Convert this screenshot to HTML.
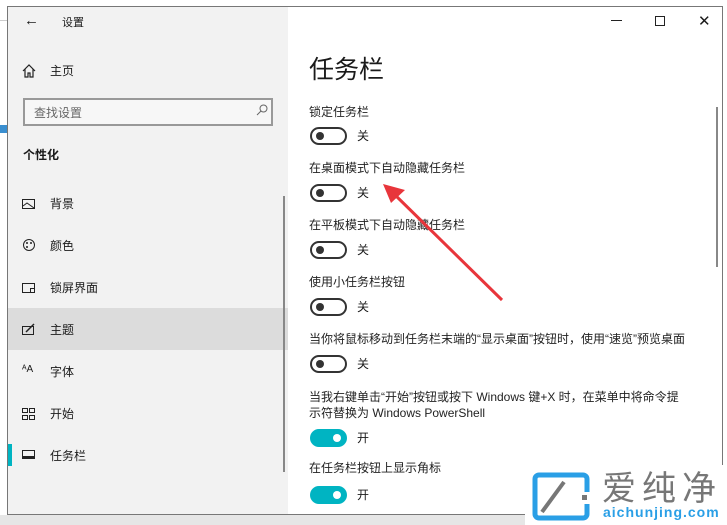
<!DOCTYPE html>
<html><head><meta charset="utf-8"><style>
*{margin:0;padding:0;box-sizing:border-box}
body{width:727px;height:525px;overflow:hidden;background:#fff;position:relative;font-family:"Liberation Sans","Noto Sans CJK SC",sans-serif;font-size:12px;color:#1a1a1a}
.a{position:absolute}
#win{left:7px;top:6px;width:716px;height:509px;border:1px solid #777;background:#fff;overflow:hidden}
#side{left:0;top:0;width:280px;height:509px;background:#f2f2f2}
.it{position:absolute;left:42px;font-size:12px;line-height:14px}
.ic{position:absolute;left:14px}
.lbl{position:absolute;left:301px;font-size:12px;line-height:14px;color:#222}
.tg{position:absolute;left:302px;width:37px;height:18px;border:2px solid #333;border-radius:9px}
.tg::after{content:"";position:absolute;left:4px;top:3px;width:8px;height:8px;border-radius:50%;background:#333}
.on{background:#00b4c2;border-color:#00b4c2}
.on::after{left:auto;right:4px;background:#fff}
.st{position:absolute;left:349px;font-size:12px;line-height:14px}
</style></head><body>
<div class="a" style="left:0;top:20px;width:7px;height:1px;background:#ccc"></div>
<div class="a" style="left:0;top:125px;width:7px;height:8px;background:#3a8fd0"></div>
<div class="a" style="left:0;top:515px;width:727px;height:10px;background:#e6e6e6"></div>
<div id="win" class="a">
 <div id="side" class="a">
  <div class="a" style="left:16px;top:5px;font-size:15px">&#8592;</div>
  <div class="a" style="left:54px;top:7px;font-size:11px">设置</div>
  <svg class="ic" style="top:57px" width="14" height="14" viewBox="0 0 14 14"><path d="M1 7 7 1 13 7M3 5v8h3V9h2v4h3V5" fill="none" stroke="#222" stroke-width="1.2"/></svg>
  <div class="it" style="top:57px">主页</div>
  <div class="a" style="left:15px;top:91px;width:250px;height:28px;border:2px solid #999;background:#f7f7f7"></div>
  <div class="a" style="left:26px;top:97px;color:#666">查找设置</div>
  <svg class="a" style="left:248px;top:97px" width="12" height="12"><circle cx="7.5" cy="4.5" r="3.5" fill="none" stroke="#666"/><path d="M5 7 1 11" stroke="#666"/></svg>
  <div class="a" style="left:15px;top:139px;font-weight:bold;font-size:12px">个性化</div>
  <div class="a" style="left:0;top:301px;width:280px;height:42px;background:#dcdcdc"></div>
  <div class="a" style="left:0;top:437px;width:4px;height:22px;background:#00b4c2"></div>
  <div class="a" style="left:275px;top:189px;width:2px;height:276px;background:#888"></div>
  <svg class="ic" style="top:191px" width="14" height="12"><rect x=".5" y="1.5" width="12" height="9" fill="none" stroke="#222"/><path d="M1 8l4-3 7 5" fill="none" stroke="#222"/></svg><div class="it" style="top:190px">背景</div>
  <svg class="ic" style="top:231px" width="14" height="14"><circle cx="7" cy="7" r="5.5" fill="none" stroke="#222"/><circle cx="5" cy="5" r="1" fill="#222"/><circle cx="9" cy="5" r="1" fill="#222"/><circle cx="5" cy="9" r="1" fill="#222"/></svg><div class="it" style="top:232px">颜色</div>
  <svg class="ic" style="top:275px" width="14" height="12"><path d="M8 10.5H.5v-9h12v5" fill="none" stroke="#222"/><rect x="8.5" y="6.5" width="4" height="4" fill="none" stroke="#222"/></svg><div class="it" style="top:274px">锁屏界面</div>
  <svg class="ic" style="top:316px" width="14" height="13"><rect x=".5" y="3.5" width="11" height="8" fill="none" stroke="#222"/><path d="M4 9l8-8" stroke="#222" stroke-width="1.5"/></svg><div class="it" style="top:316px">主题</div>
  <div class="a" style="left:14px;top:357px;font-size:10px">ᴬA</div><div class="it" style="top:358px">字体</div>
  <svg class="ic" style="top:401px" width="14" height="12"><rect x=".5" y=".5" width="5" height="4" fill="none" stroke="#222"/><rect x="7.5" y=".5" width="5" height="4" fill="none" stroke="#222"/><rect x=".5" y="7.5" width="5" height="4" fill="none" stroke="#222"/><rect x="7.5" y="7.5" width="5" height="4" fill="none" stroke="#222"/></svg><div class="it" style="top:400px">开始</div>
  <svg class="ic" style="top:443px" width="14" height="10"><rect x=".5" y=".5" width="12" height="8" fill="none" stroke="#222"/><rect x="1" y="6" width="11" height="2" fill="#222"/></svg><div class="it" style="top:442px">任务栏</div>
 </div>
 <div class="a" style="left:603px;top:13px;width:11px;height:1px;background:#222"></div>
 <div class="a" style="left:647px;top:9px;width:10px;height:10px;border:1px solid #222"></div>
 <div class="a" style="left:690px;top:5px;font-size:15px">✕</div>
 <div class="a" style="left:708px;top:100px;width:2px;height:160px;background:#888"></div>
 <div class="a" style="left:301px;top:48px;font-size:25px;line-height:30px">任务栏</div>
 <div class="lbl" style="top:98px">锁定任务栏</div><div class="tg" style="top:120px"></div><div class="st" style="top:122px">关</div>
 <div class="lbl" style="top:154px">在桌面模式下自动隐藏任务栏</div><div class="tg" style="top:177px"></div><div class="st" style="top:179px">关</div>
 <div class="lbl" style="top:211px">在平板模式下自动隐藏任务栏</div><div class="tg" style="top:234px"></div><div class="st" style="top:236px">关</div>
 <div class="lbl" style="top:268px">使用小任务栏按钮</div><div class="tg" style="top:291px"></div><div class="st" style="top:293px">关</div>
 <div class="lbl" style="top:325px">当你将鼠标移动到任务栏末端的“显示桌面”按钮时，使用“速览”预览桌面</div><div class="tg" style="top:348px"></div><div class="st" style="top:350px">关</div>
 <div class="lbl" style="top:382px;line-height:16px">当我右键单击“开始”按钮或按下 Windows 键+X 时，在菜单中将命令提<br>示符替换为 Windows PowerShell</div><div class="tg on" style="top:422px"></div><div class="st" style="top:424px">开</div>
 <div class="lbl" style="top:454px">在任务栏按钮上显示角标</div><div class="tg on" style="top:479px"></div><div class="st" style="top:481px">开</div>
</div>
<svg class="a" style="left:0;top:0" width="727" height="525"><path d="M502 300 392 192" stroke="#e8353b" stroke-width="3"/><path d="M383 184l22 6-14 13z" fill="#e8353b"/></svg>
<div class="a" style="left:525px;top:465px;width:202px;height:60px;background:#fff"></div>
<svg class="a" style="left:532px;top:472px" width="60" height="50"><rect x="3" y="3" width="52" height="43" rx="4" fill="none" stroke="#2a9fe6" stroke-width="5"/><path d="M10 40 32 10" stroke="#777" stroke-width="4"/><rect x="48" y="20" width="10" height="12" fill="#fff"/><rect x="50" y="23" width="5" height="5" fill="#777"/></svg>
<div class="a" style="left:602px;top:469px;font-size:34px;line-height:40px;color:#777;letter-spacing:6px">爱纯净</div>
<div class="a" style="left:603px;top:504px;font-size:14px;font-weight:bold;line-height:16px;color:#2a9fe6;letter-spacing:1px">aichunjing.com</div>
</body></html>
